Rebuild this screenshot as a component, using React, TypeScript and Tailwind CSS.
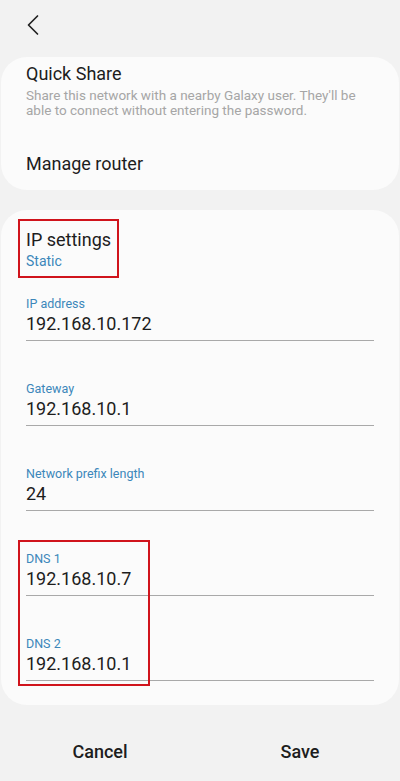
import React from "react";

interface Field {
  label: string;
  value: string;
}

const fields: Field[] = [
  { label: "IP address", value: "192.168.10.172" },
  { label: "Gateway", value: "192.168.10.1" },
  { label: "Network prefix length", value: "24" },
  { label: "DNS 1", value: "192.168.10.7" },
  { label: "DNS 2", value: "192.168.10.1" },
];

function FieldRow({ field, first }: { field: Field; first: boolean }) {
  return (
    <div className={first ? "mt-[26px]" : "mt-[40px]"}>
      <div className="text-[12.5px] leading-[16px] text-[#3c87ba]">{field.label}</div>
      <div className="text-[18px] leading-[24px] text-[#1d1d1d]">{field.value}</div>
      <div className="mt-[4px] h-px bg-[#a9a9a9]" />
    </div>
  );
}

export default function App() {
  return (
    <div
      className="w-[400px] h-[781px] bg-[#f2f2f2] overflow-hidden flex flex-col"
      style={{ fontFamily: "Roboto, 'Noto Sans', sans-serif" }}
    >
      <div className="h-[57px] pl-[25px] pt-[14px]">
        <svg width="16" height="22" viewBox="0 0 16 22" fill="none">
          <path d="M12.5 2 L3.5 11 L12.5 20" stroke="#222" strokeWidth="1.7" strokeLinecap="round" strokeLinejoin="round" />
        </svg>
      </div>

      <div className="mx-[1px] h-[133px] rounded-[26px] bg-[#fbfbfb] px-[25px] pt-[5px]">
        <div className="text-[18px] leading-[24px] text-[#1d1d1d]">Quick Share</div>
        <div className="mt-[2px] max-w-[335px] text-[13.5px] leading-[15px] text-[#a6a6a6]">
          Share this network with a nearby Galaxy user. They'll be able to connect without entering the password.
        </div>
        <div className="mt-[34px] text-[18px] leading-[24px] text-[#1d1d1d]">Manage router</div>
      </div>

      <div className="relative mx-[1px] mt-[20px] h-[495px] rounded-[26px] bg-[#fbfbfb] px-[25px] pt-[18px]">
        <div className="text-[18px] leading-[24px] text-[#1d1d1d]">IP settings</div>
        <div className="text-[14px] leading-[18px] text-[#3c87ba]">Static</div>
        {fields.map((f, i) => (
          <FieldRow key={f.label} field={f} first={i === 0} />
        ))}
        <div className="absolute left-[17px] top-[9px] w-[101px] h-[59px] border-2 border-[#d0141c]" />
        <div className="absolute left-[17px] top-[330px] w-[132px] h-[146px] border-2 border-[#d0141c]" />
      </div>

      <div className="flex flex-1 items-center pt-[16px]">
        <div className="flex-1 text-center text-[18px] font-medium text-[#1d1d1d]">Cancel</div>
        <div className="flex-1 text-center text-[18px] font-medium text-[#1d1d1d]">Save</div>
      </div>
    </div>
  );
}
